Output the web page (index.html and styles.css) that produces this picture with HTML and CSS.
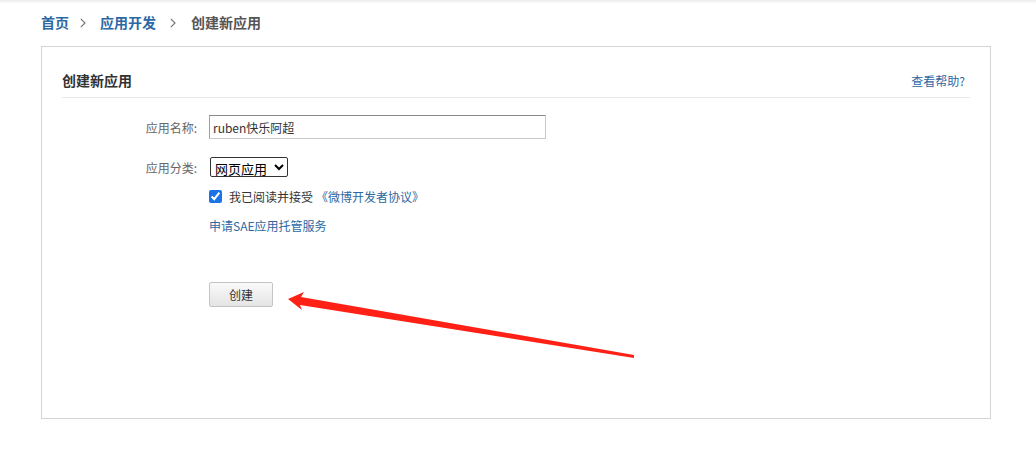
FILE: index.html
```html
<!DOCTYPE html>
<html lang="zh-CN">
<head>
<meta charset="utf-8">
<title>创建新应用</title>
<link rel="stylesheet" href="styles.css">
</head>
<body>
<div class="topbar"></div>
<nav class="crumbs">
  <a class="crumb-link" href="#">首页</a>
  <svg class="sep sep-first" width="6" height="10" viewBox="0 0 6 10"><path d="M0.8 0.8 L5 5 L0.8 9.2" fill="none" stroke="#777" stroke-width="1.2"/></svg>
  <a class="crumb-link" href="#">应用开发</a>
  <svg class="sep" width="6" height="10" viewBox="0 0 6 10"><path d="M0.8 0.8 L5 5 L0.8 9.2" fill="none" stroke="#777" stroke-width="1.2"/></svg>
  <span class="crumb-cur">创建新应用</span>
</nav>
<main class="panel">
  <div class="panel-head">
    <h2 class="panel-title">创建新应用</h2>
    <a class="help" href="#">查看帮助?</a>
  </div>
  <form class="form">
    <div class="row">
      <label class="label">应用名称:</label>
      <input class="text-input" type="text" value="ruben快乐阿超">
    </div>
    <div class="row row-select">
      <label class="label">应用分类:</label>
      <select class="select"><option>网页应用</option></select>
    </div>
    <div class="row row-check">
      <span class="label"></span>
      <label class="check"><input type="checkbox" checked class="cb"><span class="check-text">我已阅读并接受</span><a class="link" href="#">《微博开发者协议》</a></label>
    </div>
    <div class="row row-sae">
      <span class="label"></span>
      <a class="link" href="#">申请SAE应用托管服务</a>
    </div>
    <div class="row row-btn">
      <span class="label"></span>
      <button type="button" class="btn">创建</button>
    </div>
  </form>
  <svg class="arrow" width="360" height="80" viewBox="280 285 360 80">
    <polygon fill="#ff2116" points="288,299 304,292 301,297 634,355 634,358 300,305 302,310"/>
  </svg>
</main>
</body>
</html>
```
FILE: styles.css
```css
html, body { margin: 0; padding: 0; background: #fff; }
body {
  font-family: "Noto Sans CJK SC", "Noto Sans", sans-serif;
  font-size: 12px;
  color: #333;
  width: 1036px;
  height: 451px;
  overflow: hidden;
  position: relative;
}
.topbar {
  height: 4px;
  background: linear-gradient(#ececec, #fff);
}
.crumbs {
  display: flex;
  align-items: center;
  height: 36px;
  padding-left: 41px;
  font-size: 14px;
  font-weight: bold;
  line-height: 36px;
}
.crumb-link { color: #2c68a3; text-decoration: none; }
.crumb-cur { color: #555; }
.sep {
  flex: none;
  margin: 1px 15px 0 14px;
}
.sep-first { margin: 1px 14px 0 11px; }
.panel {
  margin: 6px 0 0 41px;
  width: 948px;
  height: 371px;
  border: 1px solid #d4d4d4;
}
.panel-head {
  display: flex;
  justify-content: space-between;
  align-items: center;
  margin: 20px 20px 0 20px;
  height: 26px;
  border-bottom: 1px solid #e8e8e8;
  padding-bottom: 4px;
}
.panel-title {
  margin: 0;
  font-size: 14px;
  font-weight: bold;
  color: #333;
}
.help {
  color: #2c68a3;
  text-decoration: none;
  font-size: 12px;
  margin-right: 5px;
}
.form { display: flex; flex-direction: column; padding-top: 17px; }
.row { display: flex; align-items: center; }
.label {
  width: 155px;
  text-align: right;
  color: #666;
  padding-right: 12px;
  flex: none;
}
.text-input {
  width: 337px;
  height: 24px;
  box-sizing: border-box;
  border: 1px solid #c8c8c8;
  border-top-color: #8a8a8a;
  border-left-color: #a0a0a0;
  padding: 0 3px;
  font: 12px "Noto Sans CJK SC", sans-serif;
  color: #333;
  margin: 0;
}
.row-select { margin-top: 18px; }
.select {
  margin-left: 1px;
  height: 20px;
  width: 78px;
  font: 13px "Noto Sans CJK SC", sans-serif;
  color: #000;
  border: 1px solid #333;
  border-radius: 2px;
  padding: 0;
  background: #fff;
}
.row-check { margin-top: 11px; }
.check { display: flex; align-items: center; }
.cb {
  margin: 0;
  width: 13px;
  height: 13px;
  accent-color: #1a73e8;
}
.check-text { margin-left: 7px; color: #333; }
.link { color: #2c68a3; text-decoration: none; }
.check .link { margin-left: 3px; }
.row-sae { margin-top: 12px; }
.row-btn { margin-top: 48px; }
.btn {
  width: 64px;
  height: 25px;
  border: 1px solid #c4c4c4;
  border-radius: 2px;
  background: linear-gradient(#fafafa, #e4e4e4);
  font: 12px "Noto Sans CJK SC", sans-serif;
  color: #333;
  padding: 0;
}
.arrow {
  position: absolute;
  left: 280px;
  top: 285px;
}
```
